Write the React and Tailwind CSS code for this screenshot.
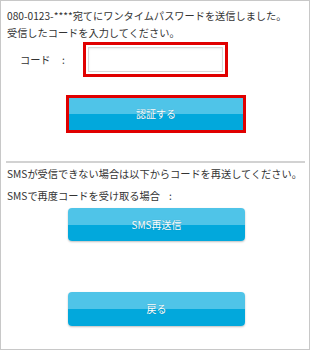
import React from "react";

function BlueButton({ label, className = "" }) {
  return (
    <div
      className={
        "relative flex items-center justify-center rounded-[4px] overflow-hidden shadow-[0_1px_2px_rgba(0,0,0,0.25)] " +
        className
      }
    >
      <div className="absolute inset-0 flex flex-col">
        <div className="flex-1 bg-[#4fc4e8]" />
        <div className="flex-1 bg-[#02a8dc]" />
      </div>
      <span className="relative text-white text-[10px] leading-none [text-shadow:0_0_1px_rgba(0,0,0,0.25)]">
        {label}
      </span>
    </div>
  );
}

export default function App() {
  return (
    <div
      className="w-[310px] h-[350px] border border-[#c8c8c8] bg-white text-[#333] text-[10.2px]"
      style={{ fontFamily: '"Noto Sans CJK JP", "Noto Sans", sans-serif' }}
    >
      <div className="pt-[6px] pl-[6px] leading-[17px]">
        <p>080-0123-****宛てにワンタイムパスワードを送信しました。</p>
        <p>受信したコードを入力してください。</p>
      </div>

      <div className="flex items-center mt-[1px] h-[35px]">
        <span className="ml-[19px] w-[42px]">コード</span>
        <span className="w-[21px]">:</span>
        <div className="w-[145px] h-[35px] border-[3px] border-[#e00000] p-[2px]">
          <div className="w-full h-full border border-[#d8d8d8] shadow-[inset_0_1px_2px_rgba(0,0,0,0.08)] bg-white" />
        </div>
      </div>

      <div className="mt-[18px] ml-[65px] w-[180px] h-[38px] border-[3px] border-[#e00000]">
        <BlueButton label="認証する" className="w-full h-full rounded-none shadow-none" />
      </div>

      <div className="mt-[28px] ml-[5px] mr-[4px] h-[2px] bg-[#d2d2d2]" />

      <div className="pl-[6px] leading-[22px]">
        <p>SMSが受信できない場合は以下からコードを再送してください。</p>
        <p>SMSで再度コードを受け取る場合{"\u00a0\u00a0\u00a0\u00a0"}:</p>
      </div>

      <BlueButton label="SMS再送信" className="mt-[1px] ml-[67px] w-[177px] h-[33px]" />

      <BlueButton label="戻る" className="mt-[51px] ml-[67px] w-[177px] h-[34px]" />
    </div>
  );
}
